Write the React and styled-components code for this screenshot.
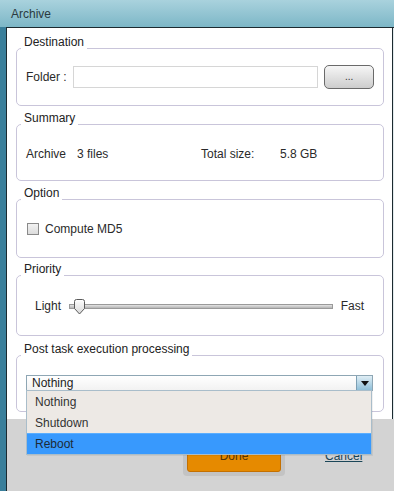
import React from 'react';
import styled, { createGlobalStyle } from 'styled-components';

const Global = createGlobalStyle`
  html, body { margin: 0; padding: 0; }
  body {
    font-family: "Liberation Sans", Arial, sans-serif;
    font-size: 12px;
    color: #222;
  }
`;

const Window = styled.div`
  width: 394px;
  height: 491px;
  display: flex;
  flex-direction: column;
  background: #3a7f9b;
  overflow: hidden;
`;

const TitleBar = styled.div`
  height: 27px;
  flex: none;
  display: flex;
  align-items: center;
  padding-left: 11px;
  background: linear-gradient(#a9d2dd, #7db7c7);
  color: #2b3a40;
  font-size: 12px;
`;

const Frame = styled.div`
  flex: 1;
  display: flex;
  flex-direction: column;
  margin-left: 6px;
  border-left: 1px solid #1c2a30;
  border-top: 1px solid #1c2a30;
  background: #e2eaec;
`;

const Body = styled.div`
  background: #fff;
  margin-right: 1px;
  border-right: 1px solid #1c2a30;
  padding: 7px 8px 7px 9px;
  position: relative;
`;

const Group = styled.fieldset`
  margin: ${p => p.$mt || 0}px 0 0;
  padding: 0 9px ${p => p.$pb}px;
  border: 1px solid #c9c5da;
  border-radius: 5px;
  min-width: 0;
`;

const Legend = styled.legend`
  padding: 0 3px 12px;
  margin-left: -5px;
  font-size: 12px;
  line-height: 14px;
  color: #222;
`;

const Row = styled.div`
  display: flex;
  align-items: center;
  margin-top: ${p => p.$mt}px;
  height: ${p => p.$h}px;
  position: relative;
`;

const Label = styled.span`
  flex: none;
  width: ${p => (p.$w ? `${p.$w}px` : 'auto')};
  line-height: 14px;
  color: #2a2a2a;
`;

const SliderLabel = styled(Label)`
  margin: ${p => (p.$end ? '0 10px 0 0' : '0 0 0 9px')};
`;

const TextInput = styled.div`
  width: 244px;
  height: 20px;
  border: 1px solid #d6d6d6;
  margin-left: 6px;
`;

const BrowseButton = styled.div`
  box-sizing: border-box;
  width: 50px;
  height: 24px;
  margin-left: 6px;
  padding-bottom: 2px;
  border: 1px solid #6a6a6a;
  border-radius: 5px;
  background: linear-gradient(#f6f6f6, #cdcdcd);
  display: flex;
  align-items: center;
  justify-content: center;
  font-size: 10px;
  color: #333;
`;

const Check = styled.span`
  width: 10px;
  height: 10px;
  border: 1px solid #8a8a8a;
  background: linear-gradient(#f2f2f2, #dcdcdc);
  margin: 0 6px 0 1px;
`;

const Track = styled.div`
  position: relative;
  flex: 1;
  height: 3px;
  margin: 0 8px;
  border: 1px solid #9a9a9a;
  background: linear-gradient(#e4e4e4, #b4b4b4);
`;

const Thumb = styled.svg`
  position: absolute;
  left: 3px;
  top: -6px;
`;

const Select = styled.div`
  position: relative;
  flex: 1;
  margin-right: 1px;
  height: 14px;
  border: 1px solid #8ea6b4;
  background: linear-gradient(#fff, #f2f2f2);
  display: flex;
  align-items: center;
`;

const SelectText = styled.span`
  flex: 1;
  padding-left: 5px;
  line-height: 14px;
  color: #222;
`;

const ArrowBox = styled.div`
  width: 15px;
  height: 14px;
  border-left: 1px solid #7d9fb3;
  background: linear-gradient(#e0eef5, #8fbfd8);
  display: flex;
  align-items: center;
  justify-content: center;
`;

const Menu = styled.div`
  position: absolute;
  left: -1px;
  right: 0;
  top: 14px;
  background: #ede9e5;
  border: 1px solid #a9bdca;
  z-index: 2;
  box-shadow: 1px 1px 0 rgba(0, 0, 0, 0.06);
`;

const MenuItem = styled.div`
  height: 21px;
  display: flex;
  align-items: center;
  padding-left: 8px;
  color: ${p => (p.$active ? '#1d2a36' : '#333')};
  background: ${p => (p.$active ? '#3899fd' : 'transparent')};
  border-top: ${p => (p.$active ? '1px solid #5aaeff' : 'none')};
  box-sizing: border-box;
`;

const Footer = styled.div`
  flex: 1;
  background: #d3d3d3;
  display: flex;
  align-items: flex-start;
  padding: 17px 0 0 176px;
`;

const ButtonWell = styled.div`
  width: 102px;
  height: 40px;
  box-sizing: border-box;
  padding: 4px;
  border-radius: 4px;
  background: #c3c3c3;
`;

const DoneButton = styled.div`
  width: 92px;
  height: 30px;
  border: 1px solid #c47000;
  border-radius: 3px;
  background: #e68a00;
  color: #5a3400;
  display: flex;
  align-items: center;
  justify-content: center;
  font-size: 12px;
`;

const CancelLink = styled.span`
  margin: 13px 0 0 40px;
  color: #1b4658;
  text-decoration: underline;
  font-size: 12px;
`;

export default function App() {
  return (
    <Window>
      <Global />
      <TitleBar>Archive</TitleBar>
      <Frame>
        <Body>
          <Group $pb={16}>
            <Legend>Destination</Legend>
            <Row $mt={4} $h={24}>
              <Label>Folder :</Label>
              <TextInput />
              <BrowseButton>...</BrowseButton>
            </Row>
          </Group>

          <Group $mt={5} $pb={19}>
            <Legend>Summary</Legend>
            <Row $mt={10} $h={14}>
              <Label $w={51}>Archive</Label>
              <Label $w={124}>3 files</Label>
              <Label $w={79}>Total size:</Label>
              <Label>5.8 GB</Label>
            </Row>
          </Group>

          <Group $mt={5} $pb={21}>
            <Legend>Option</Legend>
            <Row $mt={10} $h={14}>
              <Check />
              <Label>Compute MD5</Label>
            </Row>
          </Group>

          <Group $mt={4} $pb={21}>
            <Legend>Priority</Legend>
            <Row $mt={10} $h={16}>
              <SliderLabel>Light</SliderLabel>
              <Track>
                <Thumb width="13" height="16" viewBox="0 0 13 16">
                  <defs>
                    <linearGradient id="tg" x1="0" y1="0" x2="0" y2="1">
                      <stop offset="0" stopColor="#ffffff" />
                      <stop offset="1" stopColor="#d8d8d8" />
                    </linearGradient>
                  </defs>
                  <path
                    d="M1.5 2.5 Q1.5 0.5 3.5 0.5 L9.5 0.5 Q11.5 0.5 11.5 2.5 L11.5 9.5 L6.5 15 L1.5 9.5 Z"
                    fill="url(#tg)"
                    stroke="#5a5a5a"
                    strokeWidth="1"
                  />
                </Thumb>
              </Track>
              <SliderLabel $end>Fast</SliderLabel>
            </Row>
          </Group>

          <Group $mt={6} $pb={20}>
            <Legend>Post task execution processing</Legend>
            <Row $mt={7} $h={16}>
              <Select>
                <SelectText>Nothing</SelectText>
                <ArrowBox>
                  <svg width="8" height="5" viewBox="0 0 8 5">
                    <path d="M0 0 H8 L4 5 Z" fill="#111" />
                  </svg>
                </ArrowBox>
                <Menu>
                  <MenuItem>Nothing</MenuItem>
                  <MenuItem>Shutdown</MenuItem>
                  <MenuItem $active>Reboot</MenuItem>
                </Menu>
              </Select>
            </Row>
          </Group>
        </Body>
        <Footer>
          <ButtonWell>
            <DoneButton>Done</DoneButton>
          </ButtonWell>
          <CancelLink>Cancel</CancelLink>
        </Footer>
      </Frame>
    </Window>
  );
}
